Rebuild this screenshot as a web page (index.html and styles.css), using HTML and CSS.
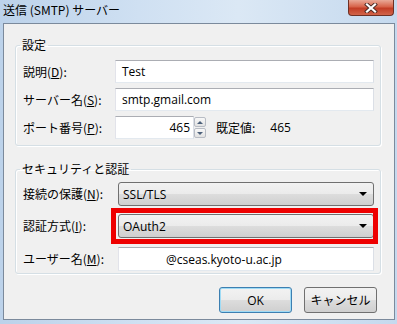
FILE: index.html
```html
<!DOCTYPE html>
<html lang="ja">
<head>
  <meta charset="UTF-8" />
  <title>送信 (SMTP) サーバー</title>
  <link rel="stylesheet" href="styles.css">
</head>
<body>
  <div class="window">
    <div class="titlebar">
      <span class="title">送信 (SMTP) サーバー</span>
      <span class="close">
        <svg width="14" height="10" viewBox="0 0 14 10">
          <path d="M3 1.5 L11 8.5 M11 1.5 L3 8.5" stroke="#4a2a24" stroke-width="4" stroke-linecap="square"/>
          <path d="M3 1.5 L11 8.5 M11 1.5 L3 8.5" stroke="#fff" stroke-width="2.2" stroke-linecap="square"/>
        </svg>
      </span>
    </div>

    <div class="client">
      <fieldset class="group">
        <legend>設定</legend>
        <div class="row">
          <span class="label">説明(<u>D</u>):</span>
          <div class="field">Test</div>
        </div>
        <div class="row">
          <span class="label">サーバー名(<u>S</u>):</span>
          <div class="field">smtp.gmail.com</div>
        </div>
        <div class="row">
          <span class="label">ポート番号(<u>P</u>):</span>
          <div class="field port">465</div>
          <div class="spin">
            <span class="spin-btn"><i class="tri up"></i></span>
            <span class="spin-btn"><i class="tri down"></i></span>
          </div>
          <span class="default">既定値:</span>
          <span class="default-num">465</span>
        </div>
      </fieldset>

      <fieldset class="group security">
        <legend>セキュリティと認証</legend>
        <div class="row">
          <span class="label">接続の保護(<u>N</u>):</span>
          <div class="select">SSL/TLS<i class="arrow"></i></div>
        </div>
        <div class="row">
          <span class="label">認証方式(<u>I</u>):</span>
          <div class="select marked">OAuth2<i class="arrow"></i></div>
        </div>
        <div class="row">
          <span class="label">ユーザー名(<u>M</u>):</span>
          <div class="field"><span class="user">@cseas.kyoto-u.ac.jp</span></div>
        </div>
      </fieldset>

      <div class="buttons">
        <button class="btn default-btn">OK</button>
        <button class="btn">キャンセル</button>
      </div>
    </div>
  </div>
</body>
</html>
```

FILE: styles.css
```css
* {
  box-sizing: border-box;
}

body {
  margin: 0;
  font-family: "Noto Sans CJK JP", sans-serif;
  font-size: 12px;
  color: #000;
}

.window {
  width: 397px;
  height: 324px;
  display: flex;
  flex-direction: column;
  background: linear-gradient(to right, #bcd2ea, #cfe0f2 35%, #dbe8f5 60%, #c5d9ee);
}

.titlebar {
  height: 23px;
  display: flex;
  justify-content: space-between;
  align-items: flex-start;
}

.title {
  margin: 2px 0 0 3px;
  line-height: 16px;
}

.close {
  width: 46px;
  height: 16px;
  margin-right: 3px;
  display: flex;
  align-items: center;
  justify-content: center;
  border: 1px solid #6e3024;
  border-top: none;
  border-radius: 0 0 4px 4px;
  background: linear-gradient(#e9a997, #d7634a 45%, #c23d25 55%, #d1644a);
}

.client {
  flex: 1;
  margin: 0 2px 4px 3px;
  border: 1px solid #7b8a9c;
  background: #f0f0f0;
  padding: 13px 13px 0 11px;
}

.group {
  margin: 0;
  min-width: 0;
  padding: 7px 6px 6px 7px;
  border: 1px solid #d5dfe5;
  border-radius: 3px;
  box-shadow: inset 1px 1px 0 #fff, 1px 1px 0 #fff;
}

.group legend {
  padding: 0 2px;
  margin-left: -3px;
  line-height: 16px;
}

.security {
  margin-top: 15px;
  padding-top: 5px;
  padding-bottom: 2px;
}

.row {
  display: flex;
  align-items: center;
  height: 23px;
}

.row + .row {
  margin-top: 5px;
}

.security .row {
  height: 24px;
}

.security .row + .row {
  margin-top: 8px;
}

.security .row:last-child {
  margin-top: 9px;
}

.label {
  width: 92px;
  flex: none;
  line-height: 16px;
}

.security .label {
  width: 95px;
}

.field {
  flex: 1;
  height: 100%;
  display: flex;
  align-items: center;
  padding: 0 6px;
  background: #fff;
  border: 1px solid;
  border-color: #abadb3 #dbdfe6 #e3e9ef #e2e3ea;
  font-family: "Open Sans", "Noto Sans CJK JP", sans-serif;
  font-size: 12px;
}

.field.port {
  flex: none;
  width: 79px;
  justify-content: flex-end;
  padding-right: 3px;
}

.user {
  margin-left: 41px;
}

.spin {
  width: 12px;
  height: 100%;
  display: flex;
  flex-direction: column;
  gap: 1px;
  padding: 1px 0;
}

.spin-btn {
  flex: 1;
  display: flex;
  align-items: center;
  justify-content: center;
  border: 1px solid #b8bcc4;
  border-radius: 2px;
  background: linear-gradient(#f8f8f8, #e2e2e2);
}

.tri {
  width: 0;
  height: 0;
  border-left: 3px solid transparent;
  border-right: 3px solid transparent;
}

.tri.up {
  border-bottom: 3px solid #4c607a;
}

.tri.down {
  border-top: 3px solid #4c607a;
}

.default {
  margin-left: 10px;
}

.default-num {
  margin-left: 15px;
  font-family: "Open Sans", sans-serif;
}

.select {
  flex: 1;
  height: 100%;
  display: flex;
  align-items: center;
  justify-content: space-between;
  padding: 0 6px 0 4px;
  border: 1px solid #707070;
  border-radius: 3px;
  background: linear-gradient(#f2f2f2, #ebebeb 50%, #dddddd 50%, #cfcfcf);
  font-family: "Open Sans", sans-serif;
  font-size: 12px;
}

/* red annotation frame drawn over the combo box */
.select.marked {
  position: relative;
}

.select.marked::after {
  content: "";
  position: absolute;
  top: -7px;
  bottom: -7px;
  left: -8px;
  right: -5px;
  border: 5px solid #ee0000;
}

.arrow {
  width: 0;
  height: 0;
  border-left: 4px solid transparent;
  border-right: 4px solid transparent;
  border-top: 4px solid #000;
}

.buttons {
  display: flex;
  justify-content: flex-end;
  gap: 12px;
  margin-top: 13px;
  padding-right: 4px;
}

.btn {
  width: 73px;
  height: 26px;
  padding: 0;
  border: 1px solid #707070;
  border-radius: 3px;
  background: linear-gradient(#f2f2f2, #ebebeb 50%, #dddddd 50%, #cfcfcf);
  font-family: "Open Sans", "Noto Sans CJK JP", sans-serif;
  font-size: 12px;
  color: #000;
}

.default-btn {
  border-color: #3c7fb1;
  box-shadow: inset 0 0 0 1px #9fdbf5;
}
```
